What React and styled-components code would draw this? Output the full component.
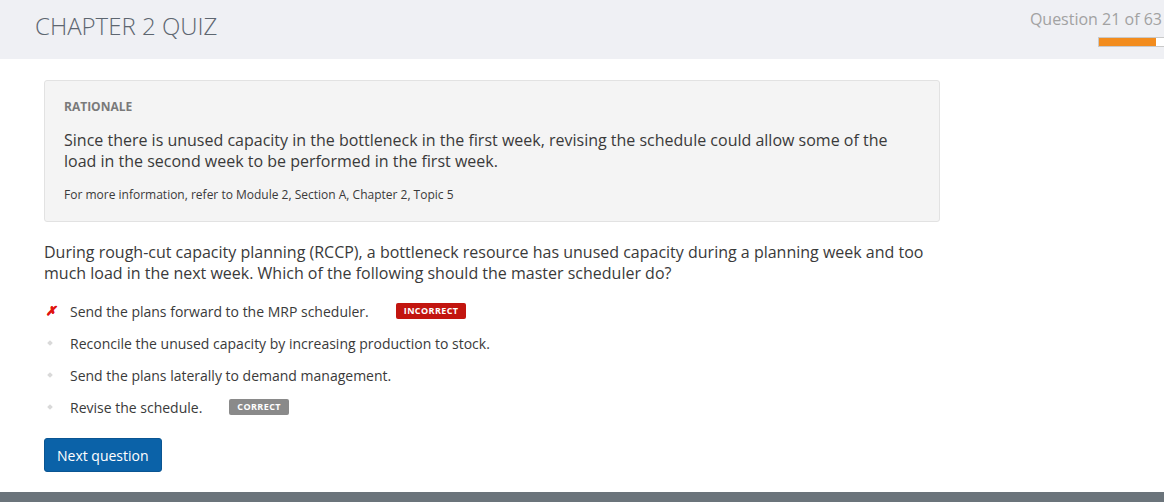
import React from "react";
import styled, { createGlobalStyle } from "styled-components";

const Global = createGlobalStyle`
  html, body { margin: 0; padding: 0; background: #ffffff; }
  body { font-family: "Open Sans", "Liberation Sans", sans-serif; color: #333; }
  * { box-sizing: border-box; }
`;

const Page = styled.div`
  height: 502px;
  display: flex;
  flex-direction: column;
  overflow: hidden;
`;

const Header = styled.header`
  height: 59px;
  background: #eff0f4;
  display: flex;
  justify-content: space-between;
  padding-left: 35px;
  flex-shrink: 0;
`;

const Title = styled.h1`
  margin: 10px 0 0;
  font-size: 24px;
  font-weight: 300;
  color: #5d6670;
  line-height: 32px;
`;

const Progress = styled.div`
  display: flex;
  flex-direction: column;
  align-items: flex-end;
  padding-top: 8px;
  padding-right: 2px;
`;

const Counter = styled.div`
  font-size: 16px;
  color: #a2a2a2;
  line-height: 22px;
`;

const Track = styled.div`
  margin-top: 7px;
  margin-right: -2px;
  width: 66px;
  height: 10px;
  background: #ffffff;
  border: 1px solid #c9c9c9;
  border-right: none;
  display: flex;
`;

const Fill = styled.div`
  background: #f28c1e;
  height: 100%;
`;

const Main = styled.main`
  flex: 1;
  padding: 21px 0 0 44px;
`;

const Rationale = styled.section`
  width: 896px;
  background: #f4f4f4;
  border: 1px solid #e2e2e2;
  border-radius: 3px;
  padding: 18px 19px 18px;
`;

const Label = styled.div`
  font-size: 12px;
  font-weight: 700;
  color: #7a7a7a;
  line-height: 16px;
`;

const RationaleText = styled.p`
  margin: 15px 0 0;
  font-size: 16px;
  line-height: 21px;
  color: #3a3a3a;
  max-width: 830px;
`;

const MoreInfo = styled.p`
  margin: 15px 0 0;
  font-size: 12px;
  line-height: 16px;
  color: #3a3a3a;
`;

const Question = styled.p`
  margin: 20px 0 0;
  font-size: 16px;
  line-height: 21px;
  color: #3a3a3a;
  max-width: 890px;
`;

const Options = styled.ul`
  list-style: none;
  margin: 11px 0 0;
  padding: 0;
`;

const Option = styled.li`
  display: flex;
  align-items: center;
  height: 32px;
  font-size: 14px;
  color: #3a3a3a;
`;

const Marker = styled.span`
  width: 26px;
  display: flex;
  align-items: center;
  padding-left: 2px;
`;

const Cross = styled.span`
  color: #e0120f;
  font-size: 12px;
  font-weight: 700;
  font-style: italic;
  line-height: 1;
  -webkit-text-stroke: 0.6px #e0120f;
`;

const Dot = styled.span`
  width: 4px;
  height: 4px;
  margin-left: 2px;
  background: #d9d9d9;
  transform: rotate(45deg);
`;

const Badge = styled.span`
  margin-left: ${(p) => p.$gap}px;
  display: inline-block;
  padding: 0 8px;
  height: 16px;
  line-height: 16px;
  border-radius: 2px;
  font-size: 9px;
  font-weight: 700;
  letter-spacing: 0.4px;
  color: #ffffff;
  background: ${(p) => (p.$ok ? "#8a8a8a" : "#c2150f")};
`;

const Button = styled.button`
  margin-top: 15px;
  height: 34px;
  padding: 0 12px;
  background: #0b62a8;
  border: 1px solid #0a5592;
  border-radius: 3px;
  color: #ffffff;
  font-family: "Open Sans", "Liberation Sans", sans-serif;
  font-size: 14px;
  font-weight: 500;
  cursor: pointer;
`;

const Footer = styled.footer`
  height: 10px;
  background: #6b747b;
  flex-shrink: 0;
`;

const options = [
  { text: "Send the plans forward to the MRP scheduler.", status: "incorrect" },
  { text: "Reconcile the unused capacity by increasing production to stock." },
  { text: "Send the plans laterally to demand management." },
  { text: "Revise the schedule.", status: "correct" },
];

export default function App() {
  return (
    <Page>
      <Global />
      <Header>
        <Title>CHAPTER 2 QUIZ</Title>
        <Progress>
          <Counter>Question 21 of 63</Counter>
          <Track>
            <Fill style={{ width: `${(57 / 65) * 100}%` }} />
          </Track>
        </Progress>
      </Header>
      <Main>
        <Rationale>
          <Label>RATIONALE</Label>
          <RationaleText>
            Since there is unused capacity in the bottleneck in the first week, revising the schedule could allow some of the load in the second week to be performed in the first week.
          </RationaleText>
          <MoreInfo>For more information, refer to Module 2, Section A, Chapter 2, Topic 5</MoreInfo>
        </Rationale>
        <Question>
          During rough-cut capacity planning (RCCP), a bottleneck resource has unused capacity during a planning week and too much load in the next week. Which of the following should the master scheduler do?
        </Question>
        <Options>
          {options.map((o, i) => (
            <Option key={i}>
              <Marker>{o.status === "incorrect" ? <Cross>✗</Cross> : <Dot />}</Marker>
              {o.text}
              {o.status === "incorrect" && <Badge $gap={27}>INCORRECT</Badge>}
              {o.status === "correct" && <Badge $gap={27} $ok>CORRECT</Badge>}
            </Option>
          ))}
        </Options>
        <Button>Next question</Button>
      </Main>
      <Footer />
    </Page>
  );
}
